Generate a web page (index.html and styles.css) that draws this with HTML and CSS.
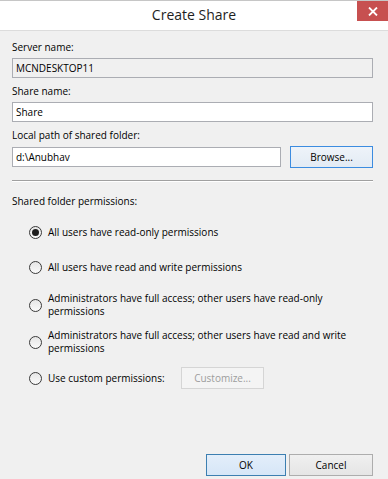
FILE: index.html
```html
<!DOCTYPE html>
<html lang="en">
<head>
  <meta charset="UTF-8" />
  <title>Create Share</title>
  <link rel="stylesheet" href="styles.css">
</head>
<body>

<div class="dialog">
  <div class="titlebar">
    <span></span>
    <span class="title">Create Share</span>
    <button class="close" title="Close">
      <svg width="10" height="9" viewBox="0 0 10 9"><path d="M1 0.5 L9 8.5 M9 0.5 L1 8.5" stroke="#fff" stroke-width="1.8"/></svg>
    </button>
  </div>

  <div class="content">
    <label class="field-label">Server name:</label>
    <div class="field readonly">MCNDESKTOP11</div>

    <label class="field-label">Share name:</label>
    <div class="field">Share</div>

    <label class="field-label">Local path of shared folder:</label>
    <div class="path-row">
      <div class="field">d:\Anubhav</div>
      <button class="btn btn-focus browse">Browse...</button>
    </div>

    <div class="separator"></div>

    <div class="field-label">Shared folder permissions:</div>
    <div class="options">
      <div class="option"><span class="radio checked"></span><span>All users have read-only permissions</span></div>
      <div class="option"><span class="radio"></span><span>All users have read and write permissions</span></div>
      <div class="option two spaced"><span class="radio"></span><span>Administrators have full access; other users have read-only<br>permissions</span></div>
      <div class="option two"><span class="radio"></span><span>Administrators have full access; other users have read and write<br>permissions</span></div>
      <div class="option"><span class="radio"></span><span class="custom-text">Use custom permissions:</span><button class="btn disabled customize">Customize...</button></div>
    </div>
  </div>

  <div class="footer">
    <button class="btn btn-default ok">OK</button>
    <button class="btn cancel">Cancel</button>
  </div>
</div>

</body>
</html>
```

FILE: styles.css
```css
* { box-sizing: border-box; }
body {
  margin: 0;
  background: #f0f0f0;
  font-family: "Open Sans", "Liberation Sans", sans-serif;
  font-size: 10px;
  color: #000;
}
.dialog {
  width: 388px;
  height: 479px;
  display: flex;
  flex-direction: column;
  background: #f0f0f0;
}
.titlebar {
  height: 31px;
  background: #fff;
  border-top: 1px solid #c6c6c6;
  border-bottom: 1px solid #dcdcdc;
  display: grid;
  grid-template-columns: 1fr auto 1fr;
}
.title {
  font-size: 14px;
  line-height: 28px;
  color: #1e1e1e;
}
.close {
  justify-self: end;
  align-self: start;
  width: 31px;
  height: 20px;
  border: none;
  padding: 0;
  background: #c75050;
  display: flex;
  align-items: center;
  justify-content: center;
}
.content {
  padding: 9px 15px 0 12px;
}
.field-label {
  display: block;
  line-height: 15px;
  margin-bottom: 3px;
}
.field {
  height: 20px;
  border: 1px solid #abadb3;
  background: #fff;
  padding: 0 3px;
  line-height: 18px;
  margin-bottom: 6px;
}
.field.readonly { background: #f0f0f0; }
.path-row {
  display: flex;
  align-items: center;
  gap: 9px;
}
.path-row .field { flex: 1; margin-bottom: 0; }
.btn {
  font-family: inherit;
  font-size: 10px;
  color: #000;
  height: 22px;
  padding: 0;
  border: 1px solid #adadad;
  background: linear-gradient(#f0f0f0, #e5e5e5);
}
.btn-focus {
  border-color: #3c8ce0;
  background: linear-gradient(#eef3f9, #e3ebf4);
}
.btn-default {
  border-color: #3c7fb1;
  background: linear-gradient(#e3eefa, #d6e6f7);
}
.browse { width: 83px; }
.separator {
  margin: 12px 0 12px;
  border-top: 1px solid #a0a0a0;
  border-bottom: 1px solid #fff;
}
.options {
  padding-left: 17px;
  margin-top: 11px;
  display: flex;
  flex-direction: column;
  gap: 11px;
}
.option {
  display: flex;
  align-items: center;
  min-height: 24px;
  line-height: 15px;
}
.option.two { line-height: 13px; }
.option.spaced { margin-top: 2px; }
.radio {
  width: 13px;
  height: 13px;
  border-radius: 50%;
  border: 1px solid #3a3a3a;
  background: linear-gradient(#e6e6e6, #fafafa);
  margin-right: 6px;
  flex-shrink: 0;
  display: flex;
  align-items: center;
  justify-content: center;
}
.radio.checked::after {
  content: "";
  width: 7px;
  height: 7px;
  border-radius: 50%;
  background: #1e1e1e;
}
.custom-text { width: 133px; }
.customize {
  width: 83px;
  color: #9d9d9d;
  border-color: #d5d5d5;
  background: #f4f4f4;
}
.footer {
  margin-top: auto;
  display: flex;
  justify-content: flex-end;
  gap: 3px;
  padding: 0 15px 3px 0;
}
.ok { width: 80px; }
.cancel { width: 84px; }
```
